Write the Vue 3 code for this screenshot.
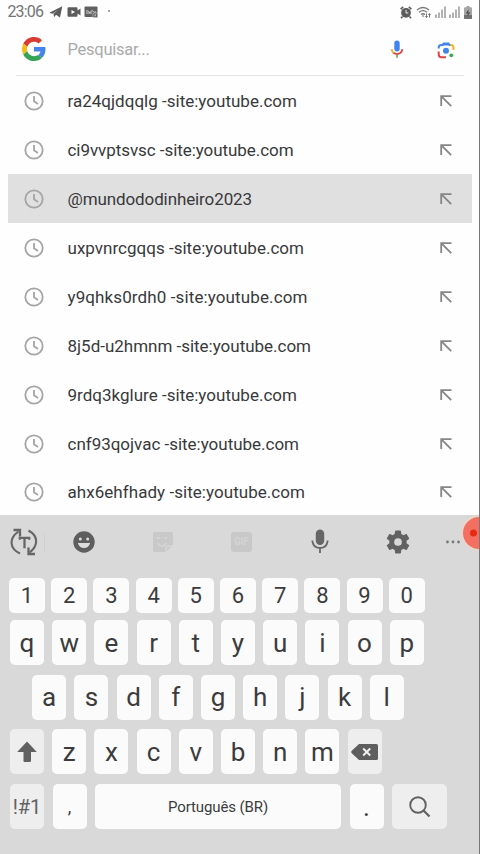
<script setup>
const suggestions = [
  { text: 'ra24qjdqqlg -site:youtube.com', width: 229.5 },
  { text: 'ci9vvptsvsc -site:youtube.com', width: 226 },
  { text: '@mundododinheiro2023', width: 184.5, active: true },
  { text: 'uxpvnrcgqqs -site:youtube.com', width: 236.5 },
  { text: 'y9qhks0rdh0 -site:youtube.com', width: 240 },
  { text: '8j5d-u2hmnm -site:youtube.com', width: 243.5 },
  { text: '9rdq3kglure -site:youtube.com', width: 229.5 },
  { text: 'cnf93qojvac -site:youtube.com', width: 231.5 },
  { text: 'ahx6ehfhady -site:youtube.com', width: 237.5 },
]
const digits = [...'1234567890']
const top = [...'qwertyuiop']
const home = [...'asdfghjkl']
const bottom = [...'zxcvbnm']

// Spreads the letters of an element so that its text takes the given width.
const vFit = {
  mounted(el, { value }) {
    const natural = el.getBoundingClientRect().width
    el.style.letterSpacing = (value - natural) / el.textContent.length + 'px'
  },
}
</script>

<template>
  <div class="screen">
    <header class="status">
      <span v-fit="35.5" class="time">23:06</span>
      <svg class="s-telegram" width="14" height="12" viewBox="0 0 14 12"><path d="M.3 6.800 13.300.3 11 11.400 7 8.800 5.200 11.300 4.400 7.800 9.500 3.500 3.500 7.800z" fill="#5c5c5c" /></svg>
      <svg class="s-video" width="14" height="10" viewBox="0 0 14 10"><path fill-rule="evenodd" d="M1.500.3h8q1 0 1 1V3.500L13.500 1.500v7L10.500 6.500v2.200q0 1-1 1h-8q-1 0-1-1V1.300q0-1 1-1zM4.500 3v4L8 5z" fill="#5c5c5c" /></svg>
      <svg class="s-card" width="15" height="12" viewBox="0 0 15 12"><rect x=".5" y=".5" width="13" height="10.500" rx="1" fill="#606060" /><path d="M2 5.500q1-2 2.500 0t2.500 0 2.500 0 2.500 0M2 7h6" fill="none" stroke="#d5d5d5" stroke-width="1" /><path d="M9 7h4.500v4.500H9z" fill="#606060" stroke="#ccc" stroke-width=".6" /><path d="M11.200 8.300v2" stroke="#ddd" /></svg>
      <i class="dot"></i>
      <div class="signals">
        <svg width="12" height="13" viewBox="0 0 12 13"><circle cx="6" cy="6.800" r="4.900" fill="#5c5c5c" /><path d="M.6 3.200 3.200.9M11.400 3.200 8.800.9M2.500 10.500 1 12.300M9.500 10.500 11 12.300" stroke="#5c5c5c" stroke-width="1.600" /><path d="M6 4v3h2.300" fill="none" stroke="#eee" stroke-width="1" /></svg>
        <svg class="wifi" width="16" height="13" viewBox="0 0 16 13"><path d="M1 4Q7-1 13 4M3 6.300Q7 3 11 6.300M5 8.500Q7 7 9 8.500" fill="none" stroke="#777" stroke-width="1.300" /><path d="m5.700 9.600 1.300 1.600 1.300-1.600z" fill="#777" /><path d="M10.500 7.500v4M9.300 10.200l1.200 1.400 1.200-1.400M13.500 11.500v-4M12.300 9l1.200-1.400L14.700 9" fill="none" stroke="#777" /></svg>
        <svg v-for="n in 2" :key="n" class="bars" width="11" height="12" viewBox="0 0 11 12"><path d="M1 8.500V12M4 6.500V12M7 3.500V12M10 .5V12" stroke="#808080" stroke-width="1.200" /></svg>
        <svg width="8" height="13" viewBox="0 0 8 13"><path d="M2.500 0h3v1.300H7q1 0 1 1V12q0 1-1 1H1q-1 0-1-1V2.300q0-1 1-1h1.500z" fill="#a5a5a5" /><path d="M0 9h8v3q0 1-1 1H1q-1 0-1-1z" fill="#707070" /><path d="M4.700 3 1.700 7.500h2L3.300 11l3-4.700h-2z" fill="#505050" /></svg>
      </div>
    </header>

    <div class="search">
      <svg class="google" width="24" height="24" viewBox="0 0 48 48">
        <path fill="#d93c32" d="M24 9.500c3.540 0 6.710 1.220 9.210 3.600l6.850-6.850C35.900 2.380 30.470 0 24 0 14.620 0 6.510 5.380 2.560 13.220l7.980 6.190C12.430 13.720 17.740 9.500 24 9.500z" />
        <path fill="#4684ec" d="M46.980 24.550c0-1.570-.15-3.090-.38-4.550H24v9.020h12.940c-.58 2.960-2.260 5.480-4.780 7.180l7.730 6c4.510-4.180 7.090-10.360 7.090-17.650z" />
        <path fill="#f5bb13" d="M10.530 28.590c-.48-1.450-.76-2.990-.76-4.590s.27-3.140.76-4.590l-7.980-6.190C.92 16.460 0 20.120 0 24s.92 7.540 2.560 10.780z" />
        <path fill="#35a454" d="M24 48c6.480 0 11.930-2.130 15.890-5.810l-7.730-6c-2.150 1.450-4.920 2.300-8.160 2.300-6.260 0-11.570-4.220-13.470-9.910l-7.980 6.190C6.510 42.620 14.620 48 24 48z" />
      </svg>
      <span class="placeholder"><span v-fit="82">Pesquisar...</span></span>
      <svg class="voice" width="14" height="19" viewBox="0 0 14 19">
        <rect x="4.300" y=".5" width="5.400" height="11" rx="2.700" fill="#4284ed" />
        <path d="M1.700 9.200q.2 2.300 1.700 3.600" fill="none" stroke="#edb528" stroke-width="1.800" />
        <path d="M3.400 12.800Q7 15.400 10.600 12.800 12.100 11.500 12.300 9.200" fill="none" stroke="#dc4a3f" stroke-width="1.800" />
        <path d="M7 14.500v3.200" stroke="#6a9f55" stroke-width="1.600" />
      </svg>
      <svg class="lens" width="18" height="18" viewBox="0 0 18 18">
        <path d="M1.700 7.500V6.500q0-2.500 2.500-2.500h1.500L6.500 2.500h5L12.500 4H14" fill="none" stroke="#4285e8" stroke-width="2" />
        <path d="M6 2h6v2.500H6z" fill="#4285e8" />
        <path d="M13.300 4h.7q2.500 0 2.500 2.500V9" fill="none" stroke="#edb728" stroke-width="2" />
        <path d="M1.700 10.500v2.800q0 2.900 2.800 2.900H9" fill="none" stroke="#d94548" stroke-width="2" />
        <circle cx="9" cy="9.700" r="3" fill="#4285e8" /><circle cx="14.300" cy="14.300" r="1.900" fill="#3ba75a" />
      </svg>
    </div>

    <main class="list">
      <div v-for="s in suggestions" :key="s.text" class="row" :class="{ active: s.active }">
        <svg class="clock" width="20" height="20" viewBox="0 0 20 20"><circle cx="10" cy="10" r="8.700" /><path d="M10 4.900V10.200l4 2.700" /></svg>
        <span class="label"><span v-fit="s.width">{{ s.text }}</span></span>
        <svg class="arrow" width="12" height="12" viewBox="0 0 12 12"><path d="M1.200 11V1.200H11.500M1.200 1.200l10 10" /></svg>
      </div>
    </main>

    <section class="keyboard">
      <div class="tools">
        <svg class="t-text" width="30" height="30" viewBox="0 0 30 30">
          <path d="M11 26.500C.5 21.500-.5 11.500 9.500 4.500M19.500 3.500C29.500 9 29.500 18.500 20.500 25.500" fill="none" stroke="#666" stroke-width="2.100" />
          <path d="M4.500 3H11v6.500M26 27h-6.500v-6.500" fill="none" stroke="#666" stroke-width="2.300" />
          <path d="M10.800 12.800v-2h9.400v2M15.500 10.800v10.500" fill="none" stroke="#666" stroke-width="2.300" />
        </svg>
        <i class="split"></i>
        <svg class="t-smile" width="22" height="22" viewBox="0 0 22 22"><circle cx="11" cy="11" r="10.700" fill="#5e5e5e" /><circle cx="7.300" cy="8" r="1.500" fill="#ddd" /><circle cx="14.700" cy="8" r="1.500" fill="#ddd" /><path d="M4.800 12h12.400q-1.500 5-6.200 5t-6.200-5z" fill="#ddd" /></svg>
        <svg class="t-sticker" width="20" height="20" viewBox="0 0 20 20"><path d="M2 0h16q2 0 2 2v11l-7 7H2q-2 0-2-2V2q0-2 2-2z" fill="#c9c9c9" /><path d="M4 6.500q1.500-1.500 3 0M11 6.500q1.500-1.500 3 0M4.500 11q4.500 6 9 0M13 20v-4q0-2 2-2h5" fill="none" stroke="#d6d6d6" stroke-width="1.500" /></svg>
        <span class="gif">GIF</span>
        <svg class="t-mic" width="18" height="25" viewBox="0 0 18 25"><rect x="4.800" y=".5" width="8.400" height="15.500" rx="4.200" fill="#666" /><path d="M1.300 11.500q.5 7.500 7.700 7.500t7.700-7.500M9 19v5" fill="none" stroke="#666" stroke-width="1.800" /></svg>
        <svg class="t-gear" width="24" height="24" viewBox="2 2 20 20"><path fill="#626262" d="M19.140 12.940c.04-.3.060-.61.060-.94 0-.32-.02-.64-.07-.94l2.030-1.580c.18-.14.230-.41.120-.61l-1.920-3.320c-.12-.22-.37-.29-.59-.22l-2.390.96c-.5-.38-1.030-.7-1.620-.94l-.36-2.540c-.04-.24-.24-.41-.48-.41h-3.840c-.24 0-.43.17-.47.41l-.36 2.540c-.59.24-1.130.57-1.620.94l-2.390-.96c-.22-.08-.47 0-.59.22L2.740 8.870c-.12.210-.08.470.120.610l2.030 1.580c-.05.3-.09.630-.09.940s.02.640.070.940l-2.030 1.580c-.18.140-.23.410-.12.610l1.920 3.320c.12.220.37.290.59.220l2.390-.96c.5.380 1.030.7 1.620.94l.36 2.540c.05.240.24.410.48.410h3.840c.24 0 .44-.17.470-.41l.36-2.540c.59-.24 1.130-.56 1.620-.94l2.390.96c.22.080.47 0 .59-.22l1.920-3.320c.12-.22.070-.47-.12-.61zM12 15.200a3.200 3.200 0 1 1 0-6.400 3.200 3.200 0 0 1 0 6.400z" /></svg>
        <svg class="t-more" width="16" height="4" viewBox="0 0 16 4"><g fill="#777"><circle cx="2.500" cy="2" r="1.400" /><circle cx="8" cy="2" r="1.400" /><circle cx="13.500" cy="2" r="1.400" /></g></svg>
      </div>
      <div class="keys digits"><span v-for="k in digits" :key="k" class="key">{{ k }}</span></div>
      <div class="keys"><span v-for="k in top" :key="k" class="key">{{ k }}</span></div>
      <div class="keys home"><span v-for="k in home" :key="k" class="key">{{ k }}</span></div>
      <div class="keys">
        <span class="key soft"><svg width="20" height="21" viewBox="0 0 20 21"><path d="M10 .5 19.800 11H14v9q0 1-1 1H7.500q-1 0-1-1v-9H.2z" fill="#606060" /></svg></span>
        <span v-for="k in bottom" :key="k" class="key">{{ k }}</span>
        <span class="key soft"><svg width="27" height="16" viewBox="0 0 27 16"><path d="M8 0h17.500Q27 0 27 1.500v13q0 1.500-1.500 1.500H8L.5 9Q0 8 .5 7z" fill="#5e5e5e" /><path d="m12.200 4.500 7 7m0-7-7 7" stroke="#f0f0f0" stroke-width="2" /></svg></span>
      </div>
      <div class="keys last">
        <span class="key soft sym">!#1</span>
        <span class="key comma">,</span>
        <span class="key space"><span v-fit="100">Português (BR)</span></span>
        <span class="key period">.</span>
        <span class="key soft find"><svg width="22" height="22" viewBox="0 0 22 22"><circle cx="9" cy="9" r="7.800" fill="none" stroke="#626262" stroke-width="1.900" /><path d="m14.500 14.500 6 6" stroke="#626262" stroke-width="2.300" /></svg></span>
      </div>
    </section>

    <svg class="bubble" width="26" height="40" viewBox="0 0 26 40"><circle cx="25" cy="20" r="18.500" fill="#eed5c7" opacity=".6" /><circle cx="25" cy="20" r="16" fill="#f46f62" /><circle cx="19.500" cy="20" r="3.500" fill="#e62b14" /></svg>
    <i class="edge"></i>
  </div>
</template>

<style>
body { margin: 0; background: #fff; }
</style>

<style scoped>
.screen {
  position: relative;
  display: flex;
  flex-direction: column;
  width: 480px;
  height: 854px;
  overflow: hidden;
  background: #fefefe;
  font-family: Roboto, "Liberation Sans", sans-serif;
  color: #3c3c3e;
}
svg { display: block; flex: none; }
.status { display: flex; align-items: center; height: 24px; padding-left: 7.500px; box-sizing: border-box; flex: none; }
.time { font-size: 16px; line-height: 24px; color: #747474; }
.s-telegram { margin-left: 6px; }
.s-video { margin-left: 3.500px; }
.s-card { margin-left: 3.500px; }
.dot { width: 2px; height: 2px; margin: -3px 0 0 9px; border-radius: 1px; background: #888; }
.signals { display: flex; align-items: center; margin-left: auto; padding-right: 8px; }
.signals svg:first-child { margin-right: -1px; }
.wifi { margin-left: 5px; }
.bars { margin-left: 3px; }
.bars + svg:last-child { margin-left: 4.500px; }
.search {
  display: flex;
  align-items: center;
  height: 52px;
  margin: 0 16px;
  padding: 0 9px 0 6px;
  box-sizing: border-box;
  border-bottom: 1px solid #e3e3e8;
  flex: none;
}
.google { margin-top: -1px; }
.placeholder { flex: 1; margin-left: 21.500px; font-size: 16.500px; color: #aaa; white-space: nowrap; }
.voice { margin-right: 33px; }
.list { height: 438.500px; padding-top: .5px; box-sizing: border-box; overflow: hidden; flex: none; }
.row {
  display: flex;
  align-items: center;
  height: 48.950px;
  margin: 0 8px;
  padding: 0 20px 0 16px;
  box-sizing: border-box;
}
.row.active { background: #e0e0e0; }
.clock { fill: none; stroke: #a5a5a5; stroke-width: 1.800; }
.row .label { flex: 1; margin-left: 23.500px; font-size: 17px; color: #39393b; white-space: nowrap; }
.arrow { fill: none; stroke: #868686; stroke-width: 1.800; }
.keyboard { flex: 1; background: #d9d9d9; }
.tools { display: flex; align-items: center; height: 54px; margin-bottom: 9.800px; padding-left: 9px; box-sizing: border-box; }
.split { width: 1px; height: 18px; margin-left: 5px; background: #cfcfcf; }
.t-smile { margin-left: 28px; }
.t-sticker { margin-left: 58px; }
.gif { width: 21px; height: 20px; margin-left: 58px; border-radius: 3px; background: #c8c8c8; color: #d4d4d4; font-size: 10px; line-height: 20px; text-align: center; font-weight: 700; }
.t-mic { margin-left: 59px; }
.t-gear { margin-left: 57px; }
.t-more { margin-left: 35px; }
.keys { display: flex; gap: 8.200px; padding-left: 10px; margin-bottom: 9.600px; }
.key {
  display: flex;
  align-items: center;
  justify-content: center;
  width: 34px;
  height: 45px;
  border-radius: 5px;
  background: #fbfbfb;
  font-size: 26px;
  line-height: 30px;
  white-space: nowrap;
}
.digits { gap: 6.200px; padding-left: 9px; margin-bottom: 7.500px; }
.digits .key { width: 36px; height: 34.500px; font-size: 22px; }
.home { padding-left: 32.200px; }
.key.soft { background: #eee; color: #626262; }
.key.sym { font-size: 20px; }
.key.comma { font-size: 18px; }
.key.space { width: 246px; font-size: 15px; }
.last { gap: 8.500px; }
.key.find { width: 55px; }
.bubble { position: absolute; right: 0; top: 513px; }
.edge { position: absolute; right: 0; top: 0; width: 1px; height: 854px; background: #777; }
</style>
